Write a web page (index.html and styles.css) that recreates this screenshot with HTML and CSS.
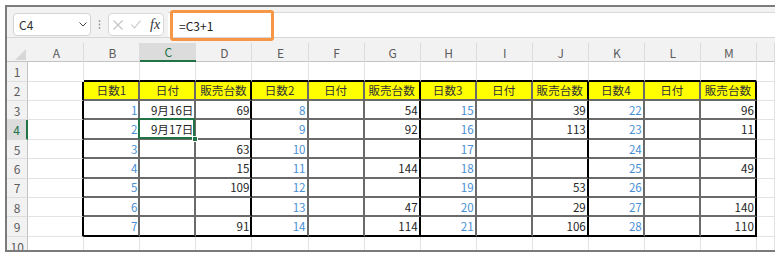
FILE: index.html
```html
<!DOCTYPE html>
<html lang="ja">
<head>
    <meta charset="UTF-8">
    <meta name="viewport" content="width=device-width, initial-scale=1.0">
    <title>販売台数</title>
    <link rel="stylesheet" href="styles.css">
</head>
<body>
    <div class="window">
        <div class="toolbar">
            <div class="name-box">
                <span>C4</span>
                <svg width="8" height="5" viewBox="0 0 8 5"><polyline points="0.5,0.5 4,4 7.5,0.5" fill="none" stroke="#444" stroke-width="1"/></svg>
            </div>
            <div class="grip">
                <svg width="3" height="9" viewBox="0 0 3 9"><circle cx="1.5" cy="1" r="0.9" fill="#9a9a9a"/><circle cx="1.5" cy="4.5" r="0.9" fill="#9a9a9a"/><circle cx="1.5" cy="8" r="0.9" fill="#9a9a9a"/></svg>
            </div>
            <div class="fx-box">
                <svg class="cancel" width="10" height="10" viewBox="0 0 10 10"><path d="M0.5 0.5 L9.5 9.5 M9.5 0.5 L0.5 9.5" stroke="#c3c3c3" stroke-width="1.1"/></svg>
                <svg class="enter" width="10" height="9" viewBox="0 0 10 9"><polyline points="0.5,4.5 3.5,8 9.5,0.5" fill="none" stroke="#c3c3c3" stroke-width="1.1"/></svg>
                <span class="fx">fx</span>
            </div>
            <div class="formula">
                =C3+1
                <div class="mark"></div>
            </div>
        </div>

        <div class="sheet">
            <div class="colhead">
                <div class="ch corner">
                    <svg width="11" height="11" viewBox="0 0 11 11"><polygon points="11,0 11,11 0,11" fill="#d7d7d7"/></svg>
                </div>
                <div class="ch">A</div>
                <div class="ch">B</div>
                <div class="ch on">C</div>
                <div class="ch">D</div>
                <div class="ch">E</div>
                <div class="ch">F</div>
                <div class="ch">G</div>
                <div class="ch">H</div>
                <div class="ch">I</div>
                <div class="ch">J</div>
                <div class="ch">K</div>
                <div class="ch">L</div>
                <div class="ch">M</div>
                <div class="ch"></div>
            </div>

            <!-- row 1 -->
            <div class="row r1">
                <div class="rh">1</div>
                <div class="cell"></div>
                <div class="cell top"></div><div class="cell top"></div><div class="cell top"></div>
                <div class="cell top"></div><div class="cell top"></div><div class="cell top"></div>
                <div class="cell top"></div><div class="cell top"></div><div class="cell top"></div>
                <div class="cell top"></div><div class="cell top"></div><div class="cell top"></div>
                <div class="cell"></div>
            </div>

            <!-- row 2: headers -->
            <div class="row">
                <div class="rh">2</div>
                <div class="cell edge"></div>
                <div class="cell box head">日数1</div><div class="cell box head">日付</div><div class="cell box head grp">販売台数</div>
                <div class="cell box head">日数2</div><div class="cell box head">日付</div><div class="cell box head grp">販売台数</div>
                <div class="cell box head">日数3</div><div class="cell box head">日付</div><div class="cell box head grp">販売台数</div>
                <div class="cell box head">日数4</div><div class="cell box head">日付</div><div class="cell box head grp">販売台数</div>
                <div class="cell"></div>
            </div>

            <!-- row 3 -->
            <div class="row">
                <div class="rh">3</div>
                <div class="cell edge"></div>
                <div class="cell box day">1</div><div class="cell box">9月16日</div><div class="cell box grp">69</div>
                <div class="cell box day">8</div><div class="cell box"></div><div class="cell box grp">54</div>
                <div class="cell box day">15</div><div class="cell box"></div><div class="cell box grp">39</div>
                <div class="cell box day">22</div><div class="cell box"></div><div class="cell box grp">96</div>
                <div class="cell"></div>
            </div>

            <!-- row 4 -->
            <div class="row">
                <div class="rh on">4</div>
                <div class="cell edge"></div>
                <div class="cell box day">2</div><div class="cell box sel">9月17日</div><div class="cell box grp"></div>
                <div class="cell box day">9</div><div class="cell box"></div><div class="cell box grp">92</div>
                <div class="cell box day">16</div><div class="cell box"></div><div class="cell box grp">113</div>
                <div class="cell box day">23</div><div class="cell box"></div><div class="cell box grp">11</div>
                <div class="cell"></div>
            </div>

            <!-- row 5 -->
            <div class="row">
                <div class="rh">5</div>
                <div class="cell edge"></div>
                <div class="cell box day">3</div><div class="cell box"></div><div class="cell box grp">63</div>
                <div class="cell box day">10</div><div class="cell box"></div><div class="cell box grp"></div>
                <div class="cell box day">17</div><div class="cell box"></div><div class="cell box grp"></div>
                <div class="cell box day">24</div><div class="cell box"></div><div class="cell box grp"></div>
                <div class="cell"></div>
            </div>

            <!-- row 6 -->
            <div class="row">
                <div class="rh">6</div>
                <div class="cell edge"></div>
                <div class="cell box day">4</div><div class="cell box"></div><div class="cell box grp">15</div>
                <div class="cell box day">11</div><div class="cell box"></div><div class="cell box grp">144</div>
                <div class="cell box day">18</div><div class="cell box"></div><div class="cell box grp"></div>
                <div class="cell box day">25</div><div class="cell box"></div><div class="cell box grp">49</div>
                <div class="cell"></div>
            </div>

            <!-- row 7 -->
            <div class="row">
                <div class="rh">7</div>
                <div class="cell edge"></div>
                <div class="cell box day">5</div><div class="cell box"></div><div class="cell box grp">109</div>
                <div class="cell box day">12</div><div class="cell box"></div><div class="cell box grp"></div>
                <div class="cell box day">19</div><div class="cell box"></div><div class="cell box grp">53</div>
                <div class="cell box day">26</div><div class="cell box"></div><div class="cell box grp"></div>
                <div class="cell"></div>
            </div>

            <!-- row 8 -->
            <div class="row">
                <div class="rh">8</div>
                <div class="cell edge"></div>
                <div class="cell box day">6</div><div class="cell box"></div><div class="cell box grp"></div>
                <div class="cell box day">13</div><div class="cell box"></div><div class="cell box grp">47</div>
                <div class="cell box day">20</div><div class="cell box"></div><div class="cell box grp">29</div>
                <div class="cell box day">27</div><div class="cell box"></div><div class="cell box grp">140</div>
                <div class="cell"></div>
            </div>

            <!-- row 9 -->
            <div class="row">
                <div class="rh">9</div>
                <div class="cell edge"></div>
                <div class="cell box last day">7</div><div class="cell box last"></div><div class="cell box last grp">91</div>
                <div class="cell box last day">14</div><div class="cell box last"></div><div class="cell box last grp">114</div>
                <div class="cell box last day">21</div><div class="cell box last"></div><div class="cell box last grp">106</div>
                <div class="cell box last day">28</div><div class="cell box last"></div><div class="cell box last grp">110</div>
                <div class="cell"></div>
            </div>

            <!-- row 10 -->
            <div class="row">
                <div class="rh">10</div>
                <div class="cell"></div>
                <div class="cell"></div><div class="cell"></div><div class="cell"></div>
                <div class="cell"></div><div class="cell"></div><div class="cell"></div>
                <div class="cell"></div><div class="cell"></div><div class="cell"></div>
                <div class="cell"></div><div class="cell"></div><div class="cell"></div>
                <div class="cell"></div>
            </div>
        </div>
    </div>
</body>
</html>
```

FILE: styles.css
```css
html, body {
    overflow: hidden;
}
body {
    margin: 0;
    padding-top: 5px;
    background-color: #fff;
    font-family: "Noto Sans CJK JP", "Noto Sans", sans-serif;
    color: #262626;
}
.window {
    margin-left: 5px;
    height: 243px;
    border-top: 2px solid #7b7b7b;
    border-left: 2px solid #7b7b7b;
    border-bottom: 2px solid #7b7b7b;
    overflow: hidden;
}

/* formula bar */
.toolbar {
    display: flex;
    align-items: flex-start;
    height: 30px;
    padding-top: 6px;
    box-sizing: border-box;
    background-color: #f2f2f2;
}
.name-box {
    display: flex;
    align-items: center;
    justify-content: space-between;
    margin-left: 6px;
    width: 78px;
    height: 23px;
    padding: 0 3px 0 5px;
    box-sizing: border-box;
    background-color: #fff;
    border: 1px solid #d4d4d4;
    border-radius: 4px;
    font-size: 12px;
    color: #333;
}
.grip {
    display: flex;
    justify-content: center;
    align-items: center;
    width: 17px;
    height: 23px;
}
.fx-box {
    display: flex;
    align-items: center;
    width: 56px;
    height: 23px;
    padding-left: 4px;
    box-sizing: border-box;
    background-color: #fff;
    border: 1px solid #d8d8d8;
    border-radius: 4px;
}
.cancel {
    margin-right: 8px;
}
.enter {
    margin-right: 9px;
}
.fx {
    font-family: "Liberation Serif", serif;
    font-style: italic;
    font-size: 14px;
    color: #333;
}
.formula {
    position: relative;
    flex: 1;
    align-self: stretch;
    margin: -1px 0 0 4px;
    padding-left: 11px;
    background-color: #fff;
    border-top: 1px solid #d9d9d9;
    font-size: 12px;
    line-height: 25px;
    color: #222;
}
.mark {
    position: absolute;
    left: 2px;
    top: -3px;
    width: 104px;
    height: 31px;
    box-sizing: border-box;
    border: 3px solid #f79646;
    border-radius: 3px;
    z-index: 2;
}

/* sheet */
.colhead, .row {
    display: grid;
    grid-template-columns: 21.3px repeat(13, 56.05px) 1fr;
}
.colhead {
    height: 25px;
    padding-top: 5px;
    box-sizing: border-box;
    background-color: #f2f2f2;
    border-top: 1px solid #d6d6d6;
    border-bottom: 1px solid #c4c4c4;
}
.ch {
    display: flex;
    align-items: center;
    justify-content: center;
    background: linear-gradient(#dcdcdc, #dcdcdc) right top / 1px 100% no-repeat;
    font-size: 12px;
    color: #5c5c5c;
}
.ch.corner {
    justify-content: flex-end;
    align-items: flex-end;
    padding: 0 2px 2px 0;
    background: none;
}
.ch.on {
    background-color: #dcdcdc;
    color: #217346;
    border-bottom: 2px solid #217346;
}
.row {
    height: 19.4px;
}
.row.r1 {
    height: 19.7px;
}
.rh {
    display: flex;
    align-items: center;
    justify-content: center;
    background-color: #f2f2f2;
    border-right: 1px solid #c4c4c4;
    border-bottom: 1px solid #dedede;
    font-size: 12px;
    color: #5c5c5c;
}
.rh.on {
    background-color: #dcdcdc;
    color: #217346;
    border-right: 2px solid #217346;
}
.cell {
    display: flex;
    align-items: center;
    justify-content: flex-end;
    padding-right: 1px;
    border-right: 1px solid #e3e3e3;
    border-bottom: 1px solid #e3e3e3;
    font-size: 11.6px;
    white-space: nowrap;
}
.cell.top {
    border-bottom: 2px solid #000;
}
.cell.edge {
    border-right: 2px solid #000;
}
.cell.box {
    border-right: 2px solid #6a6a6a;
    border-bottom: 2px solid #6a6a6a;
}
.cell.grp {
    border-right-color: #000;
}
.cell.last {
    border-bottom-color: #000;
}
.cell.head {
    justify-content: center;
    padding: 0;
    background-color: #ffff00;
    color: #333;
}
.cell.day {
    color: #4a8fd4;
}
.cell.sel {
    position: relative;
}
.cell.sel::before {
    content: "";
    position: absolute;
    left: -2px;
    top: -2px;
    right: -1px;
    bottom: -1px;
    border: 2px solid #217346;
    z-index: 1;
}
.cell.sel::after {
    content: "";
    position: absolute;
    right: -4px;
    bottom: -4px;
    width: 4px;
    height: 4px;
    background-color: #217346;
    border: 1px solid #fff;
    z-index: 1;
}
```
